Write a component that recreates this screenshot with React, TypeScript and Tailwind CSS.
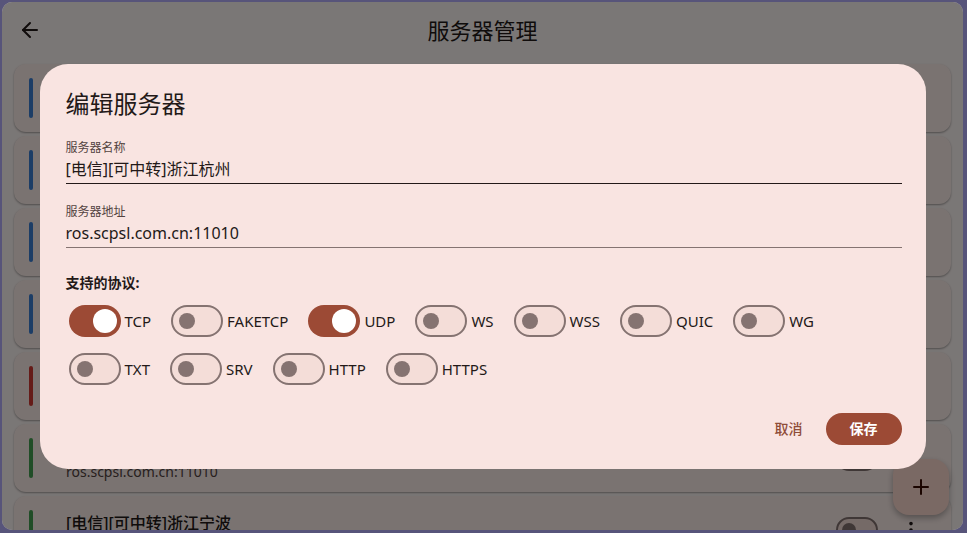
import { ArrowLeft, MoreVertical, Plus } from 'lucide-react'

type Server = {
    name: string
    address: string
    color: string
}

const servers: Server[] = [
    { name: '[电信][可中转]浙江杭州', address: 'ros.scpsl.com.cn:11010', color: 'bg-[#3b7fd6]' },
    { name: '[电信][可中转]浙江温州', address: 'ros.scpsl.com.cn:11010', color: 'bg-[#3b7fd6]' },
    { name: '[电信][可中转]江苏南京', address: 'ros.scpsl.com.cn:11010', color: 'bg-[#3b7fd6]' },
    { name: '[电信][可中转]上海', address: 'ros.scpsl.com.cn:11010', color: 'bg-[#3b7fd6]' },
    { name: '[联通]广东广州', address: 'ros.scpsl.com.cn:11010', color: 'bg-[#d43a32]' },
    { name: '[移动][可中转]浙江金华', address: 'ros.scpsl.com.cn:11010', color: 'bg-[#44a152]' },
    { name: '[电信][可中转]浙江宁波', address: 'ros.scpsl.com.cn:11010', color: 'bg-[#44a152]' },
]

const protocols = [
    { name: 'TCP', on: true },
    { name: 'FAKETCP', on: false },
    { name: 'UDP', on: true },
    { name: 'WS', on: false },
    { name: 'WSS', on: false },
    { name: 'QUIC', on: false },
    { name: 'WG', on: false },
    { name: 'TXT', on: false },
    { name: 'SRV', on: false },
    { name: 'HTTP', on: false },
    { name: 'HTTPS', on: false },
]

function Toggle({ on }: { on: boolean }) {
    if (on) {
        return (
            <span className="flex h-8 w-[52px] shrink-0 items-center justify-end rounded-full bg-[#9c4a35] pr-1">
                <span className="h-6 w-6 rounded-full bg-white" />
            </span>
        )
    }
    return (
        <span className="flex h-8 w-[52px] shrink-0 items-center rounded-full border-2 border-[#857371] bg-[#f4ddd8] pl-[6px]">
            <span className="h-4 w-4 rounded-full bg-[#857371]" />
        </span>
    )
}

function ServerCard({ server }: { server: Server }) {
    return (
        <div className="flex h-[68px] shrink-0 items-center rounded-xl bg-[#fff1ed] pl-[15px] pr-[29px] shadow-[0_1px_2px_rgba(0,0,0,0.35)]">
            <div className={`h-10 w-1 rounded-full ${server.color}`} />
            <div className="ml-[33px] flex flex-1 flex-col pt-[6px]">
                <span className="text-[16px] leading-[22px] font-medium text-[#231918]">{server.name}</span>
                <span className="text-[14px] leading-[20px] text-[#53433f]">{server.address}</span>
            </div>
            <span className="flex h-[26px] w-[42px] items-center rounded-full border-2 border-[#857371] bg-[#f4ddd8] pl-1">
                <span className="h-[14px] w-[14px] rounded-full bg-[#857371]" />
            </span>
            <MoreVertical size={22} className="ml-[22px] text-[#231918]" />
        </div>
    )
}

export default function App() {
    return (
        <div
            className="h-[533px] w-full bg-[#57547a] pt-[2px] pl-[2px] pr-[4px] pb-[3px]"
            style={{ fontFamily: '"Noto Sans", "Noto Sans CJK SC", sans-serif' }}
        >
            <div className="relative flex h-full flex-col overflow-hidden rounded-[10px] bg-[#fff8f6]">
                {/* App bar */}
                <header className="grid h-14 shrink-0 grid-cols-[56px_1fr_56px] items-center">
                    <div className="flex justify-center">
                        <ArrowLeft size={24} strokeWidth={2} className="text-[#231918]" />
                    </div>
                    <h1 className="text-center text-[22px] leading-7 text-[#231918]">服务器管理</h1>
                    <div />
                </header>

                {/* Server list */}
                <main className="flex flex-col gap-1 px-3 pt-[6px]">
                    {servers.map((s, i) => (
                        <ServerCard key={i} server={s} />
                    ))}
                </main>

                <button className="absolute right-[14px] bottom-[15px] flex h-14 w-14 items-center justify-center rounded-2xl bg-[#ffdbd1] shadow-[0_3px_6px_rgba(0,0,0,0.3)]">
                    <Plus size={24} className="text-[#3a0b01]" />
                </button>

                {/* Dialog */}
                <div className="absolute inset-0 flex items-center justify-center bg-black/[0.52]">
                    <div className="w-[886px] rounded-[28px] bg-[#f9e4e1] pl-[26px] pr-6 pt-6 pb-6 text-[#231918]">
                        <h2 className="text-[24px] leading-8">编辑服务器</h2>

                        <div className="mt-5 border-b border-[#231918] pb-[2px]">
                            <div className="text-[12px] leading-4 text-[#53433f]">服务器名称</div>
                            <div className="mt-px text-[16px] leading-6">[电信][可中转]浙江杭州</div>
                        </div>

                        <div className="mt-5 border-b border-[#857371] pb-[2px]">
                            <div className="text-[12px] leading-4 text-[#53433f]">服务器地址</div>
                            <div className="mt-px text-[16px] leading-6">ros.scpsl.com.cn:11010</div>
                        </div>

                        <div className="mt-[25px] text-[14px] leading-5 font-bold">支持的协议:</div>

                        <div className="mt-3 flex flex-wrap gap-x-5 gap-y-4 pl-[3px]">
                            {protocols.map(p => (
                                <div key={p.name} className="flex items-center gap-1">
                                    <Toggle on={p.on} />
                                    <span className="text-[15px] leading-5">{p.name}</span>
                                </div>
                            ))}
                        </div>

                        <div className="mt-7 flex items-center justify-end gap-[11px]">
                            <button className="h-8 px-3 text-[14px] font-medium text-[#8f4c38]">取消</button>
                            <button className="h-8 rounded-full bg-[#9c4a35] px-6 text-[14px] font-bold text-white">保存</button>
                        </div>
                    </div>
                </div>
            </div>
        </div>
    )
}
